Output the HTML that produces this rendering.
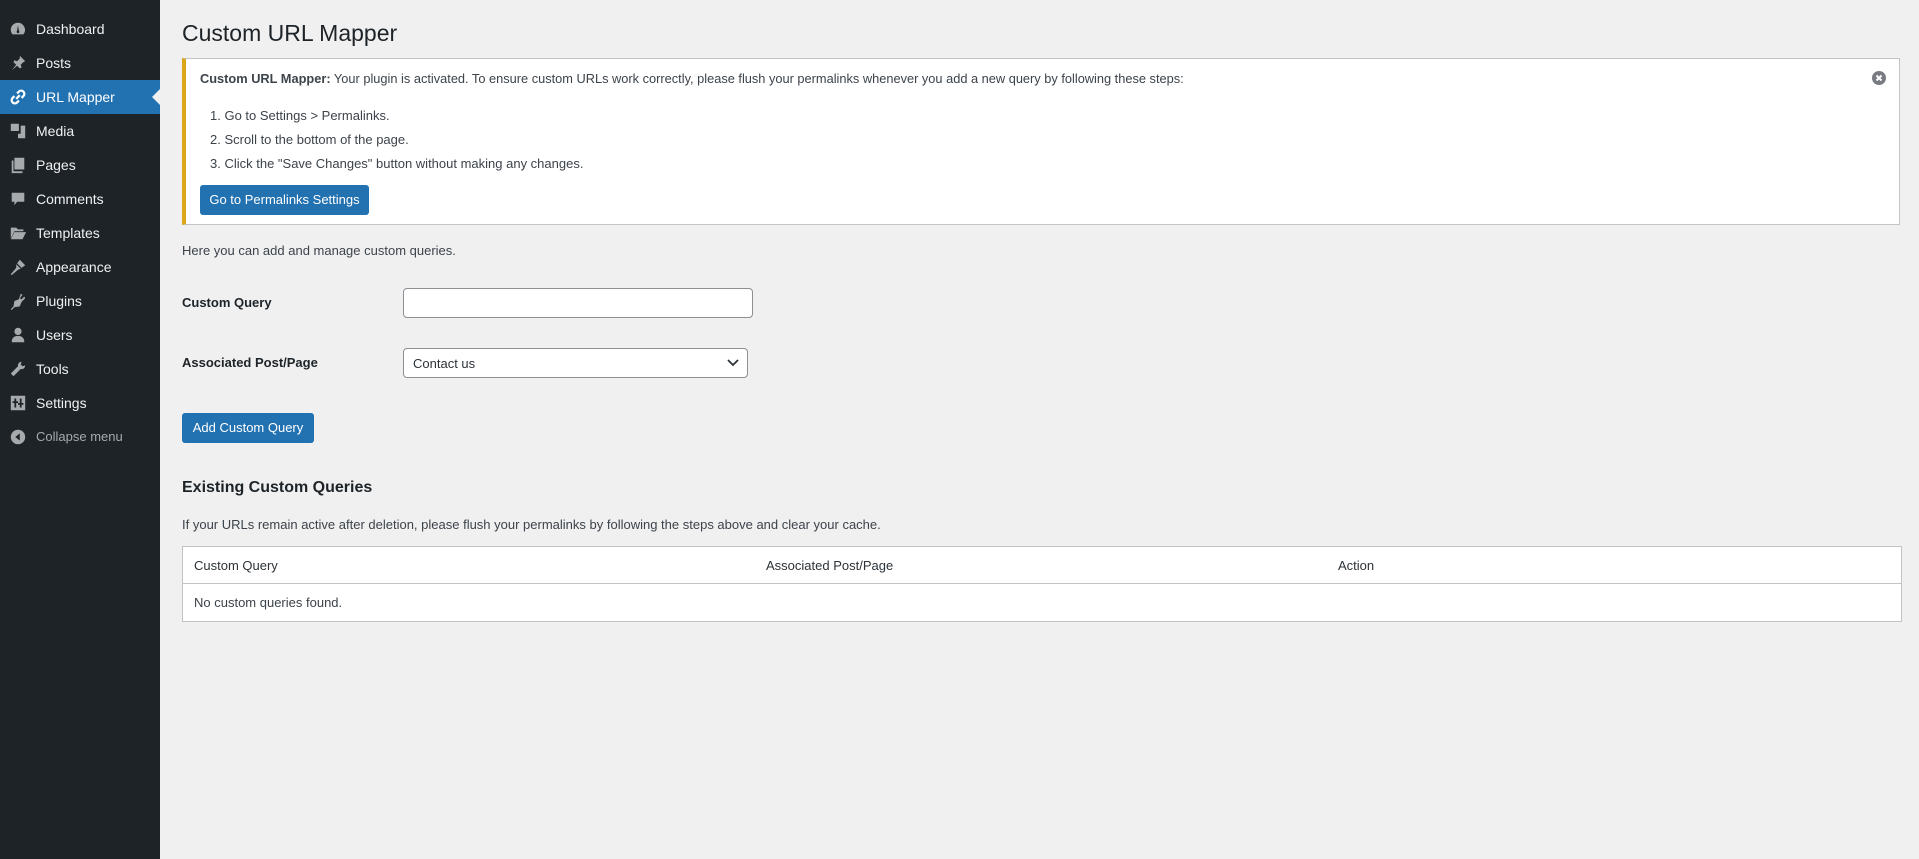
<!DOCTYPE html>
<html><head><meta charset="utf-8">
<style>
*{box-sizing:border-box;margin:0;padding:0}
body{width:1919px;height:859px;background:#f0f0f1;font-family:"Liberation Sans",sans-serif;font-size:13px;color:#3c434a;position:relative;overflow:hidden}
#side{position:absolute;left:0;top:0;width:160px;height:859px;background:#1d2327}
.mi{position:absolute;left:0;width:160px;height:34px;color:#f0f0f1;font-size:14px;line-height:34px;padding-left:36px}
.mi .ic{position:absolute;left:9px;top:8px;width:18px;height:18px;color:#a7aaad}
.mi.act{background:#2271b1;color:#fff}
.mi.act .ic{color:#fff}
.mi.act:after{content:"";position:absolute;right:0;top:9px;border:8px solid transparent;border-right-color:#f0f0f1}
.abs{position:absolute}
.btn{position:absolute;background:#2271b1;color:#fff;border-radius:3px;font-size:13px;text-align:center}
</style></head><body>
<div id="side">
<div class="mi" style="top:12px"><svg class="ic" viewBox="0 0 20 20"><path fill="currentColor" d="M10 3a8 8 0 0 0-8 8c0 2 .7 3.8 2 5h12a8 8 0 0 0-6-13zm0 3l1 6a1.5 1.5 0 1 1-2 0z"/></svg>Dashboard</div>
<div class="mi" style="top:46px"><svg class="ic" viewBox="0 0 20 20"><path fill="currentColor" d="M12 2l6 6-2 1-3 3 1 3-2 1-3-3-6 5 5-6-3-3 1-2 3 1 3-3z"/></svg>Posts</div>
<div class="mi act" style="top:80px"><svg class="ic" viewBox="0 0 20 20"><path fill="none" stroke="currentColor" stroke-width="2.5" d="M8 12l4-4M9 6l2-2a3 3 0 0 1 5 5l-2 2M11 14l-2 2a3 3 0 0 1-5-5l2-2"/></svg>URL Mapper</div>
<div class="mi" style="top:114px"><svg class="ic" viewBox="0 0 20 20"><path fill="currentColor" d="M2 2h9v8H2zM13 4h5v14h-8v-5h3z"/></svg>Media</div>
<div class="mi" style="top:148px"><svg class="ic" viewBox="0 0 20 20"><path fill="currentColor" d="M6 2h11v13H6zM3 5h2v12h10v2H3z"/></svg>Pages</div>
<div class="mi" style="top:182px"><svg class="ic" viewBox="0 0 20 20"><path fill="currentColor" d="M3 3h14v10H9l-3 4v-4H3z"/></svg>Comments</div>
<div class="mi" style="top:216px"><svg class="ic" viewBox="0 0 20 20"><path fill="currentColor" d="M2 4h6l2 2h6v2H6l-4 8zM6 9h13l-4 8H2z"/></svg>Templates</div>
<div class="mi" style="top:250px"><svg class="ic" viewBox="0 0 20 20"><path fill="currentColor" d="M12 2l6 6-4 3-5-5zM8 7l5 5-3 1-7 6-1-1 6-7z"/></svg>Appearance</div>
<div class="mi" style="top:284px"><svg class="ic" viewBox="0 0 20 20"><path fill="currentColor" d="M13 2l2 1-3 4 2 1 3-3 1 2-4 4-2 5-6 1-3 3-1-1 3-3 1-6 5-2z"/></svg>Plugins</div>
<div class="mi" style="top:318px"><svg class="ic" viewBox="0 0 20 20"><circle cx="10" cy="6" r="4" fill="currentColor"/><path fill="currentColor" d="M3 18c0-5 3-7 7-7s7 2 7 7z"/></svg>Users</div>
<div class="mi" style="top:352px"><svg class="ic" viewBox="0 0 20 20"><path fill="currentColor" d="M14 2a4 4 0 0 0-4 5L2 15l3 3 8-8a4 4 0 0 0 5-4l-3 1-2-2z"/></svg>Tools</div>
<div class="mi" style="top:386px"><svg class="ic" viewBox="0 0 20 20"><path fill="currentColor" d="M2 2h16v16H2zM6 5v3H4v2h2v5h2v-5h2V8H8V5zm6 0v5h-2v2h2v3h2v-3h2v-2h-2V5z"/></svg>Settings</div>
<div class="mi" style="top:420px;color:#a7aaad;font-size:13px"><svg class="ic" viewBox="0 0 20 20"><circle cx="10" cy="10" r="8" fill="currentColor"/><path fill="#1d2327" d="M12 6v8l-5-4z"/></svg>Collapse menu</div>
</div>

<div class="abs" style="left:182px;top:20px;font-size:23px;color:#1d2327">Custom URL Mapper</div>

<div class="abs" style="left:182px;top:58px;width:1718px;height:167px;background:#fff;border:1px solid #c3c4c7;border-left:4px solid #dba617"></div>
<div class="abs" style="left:200px;top:71px;color:#3c434a;font-size:12.8px"><b>Custom URL Mapper:</b> Your plugin is activated. To ensure custom URLs work correctly, please flush your permalinks whenever you add a new query by following these steps:</div>
<div class="abs" style="left:210px;top:104px;line-height:24px">1. Go to Settings &gt; Permalinks.<br>2. Scroll to the bottom of the page.<br>3. Click the "Save Changes" button without making any changes.</div>
<div class="btn" style="left:200px;top:185px;width:169px;height:30px;line-height:30px">Go to Permalinks Settings</div>
<svg class="abs" style="left:1872px;top:71px" width="14" height="14" viewBox="0 0 14 14"><circle cx="7" cy="7" r="7" fill="#787c82"/><path d="M4.5 4.5l5 5M9.5 4.5l-5 5" stroke="#fff" stroke-width="2"/></svg>

<div class="abs" style="left:182px;top:243px">Here you can add and manage custom queries.</div>
<div class="abs" style="left:182px;top:295px;font-weight:bold;color:#1d2327">Custom Query</div>
<div class="abs" style="left:403px;top:288px;width:350px;height:30px;background:#fff;border:1px solid #8c8f94;border-radius:4px"></div>
<div class="abs" style="left:182px;top:355px;font-weight:bold;color:#1d2327">Associated Post/Page</div>
<div class="abs" style="left:403px;top:348px;width:345px;height:30px;background:#fff;border:1px solid #8c8f94;border-radius:4px;padding:7px 9px;color:#2c3338">Contact us
<svg style="position:absolute;right:8px;top:10px" width="12" height="8" viewBox="0 0 12 8"><path d="M1 1l5 5 5-5" fill="none" stroke="#2c3338" stroke-width="1.8"/></svg></div>
<div class="btn" style="left:182px;top:413px;width:132px;height:30px;line-height:30px">Add Custom Query</div>

<div class="abs" style="left:182px;top:479px;font-size:16px;font-weight:bold;color:#1d2327">Existing Custom Queries</div>
<div class="abs" style="left:182px;top:517px">If your URLs remain active after deletion, please flush your permalinks by following the steps above and clear your cache.</div>
<div class="abs" style="left:182px;top:546px;width:1720px;height:76px;background:#fff;border:1px solid #c3c4c7">
<div class="abs" style="left:0;top:36px;width:100%;border-top:1px solid #c3c4c7"></div>
<div class="abs" style="left:11px;top:11px;font-size:13px;color:#2c3338">Custom Query</div>
<div class="abs" style="left:583px;top:11px;font-size:13px;color:#2c3338">Associated Post/Page</div>
<div class="abs" style="left:1155px;top:11px;font-size:13px;color:#2c3338">Action</div>
<div class="abs" style="left:11px;top:48px">No custom queries found.</div>
</div>
</body></html>
